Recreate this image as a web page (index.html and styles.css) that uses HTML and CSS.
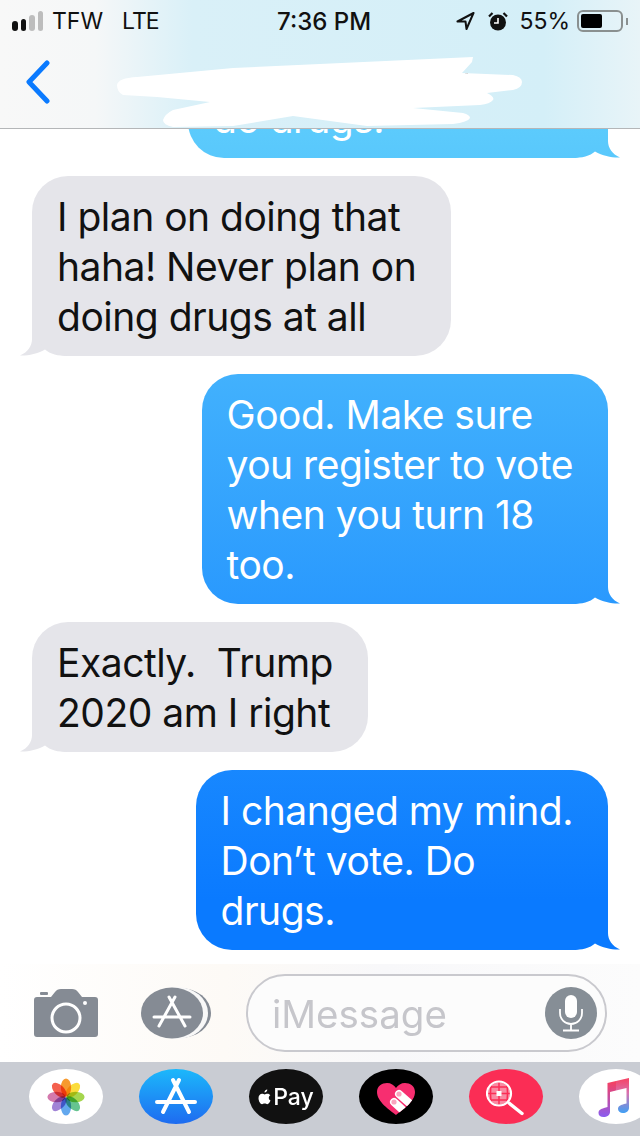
FILE: index.html
```html
<!DOCTYPE html>
<html lang="en">
<head>
  <meta charset="UTF-8">
  <meta name="viewport" content="width=device-width, initial-scale=1.0">
  <title>Messages</title>
  <link rel="stylesheet" href="styles.css">
</head>

<body>
  <div class="phone">
    <header class="top">
      <div class="status">
        <div class="status-left">
          <span class="signal"><i class="on s1"></i><i class="on s2"></i><i class="s3"></i><i class="s4"></i></span>
          <span class="carrier">TFW</span>
          <span class="network">LTE</span>
        </div>
        <div class="time">7:36 PM</div>
        <div class="status-right">
          <svg class="locate" width="19" height="18" viewBox="0 0 19 18"><path d="M17.5 1 1.5 9.5H9.5L10.5 17Z" fill="none" stroke="#111" stroke-width="2" stroke-linejoin="round"/></svg>
          <svg class="alarm" width="20" height="19" viewBox="0 0 20 19">
            <circle cx="10" cy="10.5" r="8" fill="#111"/>
            <path d="M10 6v5H6" fill="none" stroke="#fff" stroke-width="1.6"/>
            <path d="M1 4.5 4.5 1M19 4.5 15.5 1" stroke="#111" stroke-width="2.2"/>
          </svg>
          <span class="percent">55%</span>
          <span class="battery"><span class="charge"></span></span>
          <span class="nub"></span>
        </div>
      </div>
      <nav class="nav">
        <svg class="back" width="26" height="44" viewBox="0 0 26 44"><path d="M22 3 4 22l18 19" fill="none" stroke="#0a7aff" stroke-width="5" stroke-linecap="round" stroke-linejoin="round"/></svg>
      </nav>
      <svg class="scribble" width="640" height="128" viewBox="0 0 640 128">
        <g fill="#555">
          <rect x="190" y="72" width="7" height="2"/>
          <rect x="215" y="71" width="4" height="2"/>
          <rect x="447" y="72" width="8" height="2"/>
          <rect x="465" y="73" width="3" height="2"/>
        </g>
        <path fill="#fff" d="M117 85Q118 78 137 77L233 68 473 57 472 62 462 73 513 75Q522 77 522 82 522 88 513 90L487 93Q495 97 493 100 490 104 480 105L413 108 463 113Q470 115 470 118 468 122 453 124L367 126 293 116 233 126 173 127Q163 125 163 120 165 114 173 110L210 102 157 97 123 95Q117 92 117 85Z"/>
      </svg>
    </header>

    <main class="thread">
      <div class="bubble sent first">do drugs.</div>
      <div class="bubble received">I plan on doing that<br>haha! Never plan on<br>doing drugs at all</div>
      <div class="bubble sent">Good. Make sure<br>you register to vote<br>when you turn 18<br>too.</div>
      <div class="bubble received">Exactly.&nbsp; Trump<br>2020 am I right</div>
      <div class="bubble sent">I changed my mind.<br>Don’t vote. Do<br>drugs.</div>
    </main>

    <section class="composer">
      <svg class="camera" width="64" height="48" viewBox="0 0 64 48">
        <rect x="6" y="3" width="8" height="3" rx="1" fill="#858b94"/>
        <path fill="#858b94" d="M3 8H17L21 3Q23 0 27 0H38Q42 0 44 3L48 8H61Q64 8 64 11V45Q64 48 61 48H3Q0 48 0 45V11Q0 8 3 8Z"/>
        <circle cx="32" cy="29" r="14" fill="none" stroke="#fff" stroke-width="3"/>
        <circle cx="51" cy="14" r="2" fill="#fff"/>
      </svg>
      <svg class="apps" width="70" height="52" viewBox="0 0 70 52">
        <ellipse cx="39" cy="26" rx="31" ry="25" fill="#858b94"/>
        <ellipse cx="36" cy="26" rx="31" ry="26" fill="#f8f8f8"/>
        <ellipse cx="31" cy="26" rx="31" ry="25.5" fill="#858b94"/>
        <path d="M34 10 18 39M28 10 44 39M13 30H49" fill="none" stroke="#fff" stroke-width="3" stroke-linecap="round"/>
      </svg>
      <div class="input">
        <span class="placeholder">iMessage</span>
        <span class="mic">
          <svg width="30" height="38" viewBox="0 0 30 38">
            <rect x="9" y="1" width="12" height="23" rx="6" fill="#fff"/>
            <path d="M4 15v4a11 11 0 0 0 22 0v-4M15 30v6M7 36.5h16" fill="none" stroke="#fff" stroke-width="1.8"/>
          </svg>
        </span>
      </div>
    </section>

    <section class="strip">
      <div class="pill pill-white">
        <svg class="flower" width="38" height="38" viewBox="0 0 48 48">
          <ellipse cx="24" cy="12" rx="6.5" ry="11.5" fill="#f79a2e"/>
          <ellipse cx="24" cy="12" rx="6.5" ry="11.5" fill="#fbdc3c" transform="rotate(45 24 24)"/>
          <ellipse cx="24" cy="12" rx="6.5" ry="11.5" fill="#a5d64e" transform="rotate(90 24 24)"/>
          <ellipse cx="24" cy="12" rx="6.5" ry="11.5" fill="#66c490" transform="rotate(135 24 24)"/>
          <ellipse cx="24" cy="12" rx="6.5" ry="11.5" fill="#63a8ee" transform="rotate(180 24 24)"/>
          <ellipse cx="24" cy="12" rx="6.5" ry="11.5" fill="#a183d6" transform="rotate(225 24 24)"/>
          <ellipse cx="24" cy="12" rx="6.5" ry="11.5" fill="#d479ad" transform="rotate(270 24 24)"/>
          <ellipse cx="24" cy="12" rx="6.5" ry="11.5" fill="#f4604e" transform="rotate(315 24 24)"/>
        </svg>
      </div>
      <div class="pill pill-store">
        <svg width="44" height="40" viewBox="0 0 44 40">
          <path d="M25 3 9 35M19 3 35 35M3 25H41" fill="none" stroke="#fff" stroke-width="4" stroke-linecap="round"/>
        </svg>
      </div>
      <div class="pill pill-pay">
        <svg width="13" height="16" viewBox="0 0 16 20"><path fill="#fff" d="M11.5 .5c.2 1.8-1.5 4-3.5 3.9-.3-1.8 1.600-3.800 3.500-3.900zM15.500 14.500c-.8 2-2.400 4.500-4 4.500-1.200 0-1.800-.8-3.300-.8s-2.200.8-3.300.8C2.900 19 .5 15 .5 11.500c0-3.400 2.200-5.500 4.400-5.500 1.400 0 2.500.9 3.300.9s2-.9 3.700-.9c1.300 0 2.600.7 3.400 1.900-2.800 1.600-2.400 5.500.2 6.600z"/></svg>
        <span>Pay</span>
      </div>
      <div class="pill pill-heart">
        <svg class="heart" width="38" height="32" viewBox="0 0 38 32">
          <defs>
            <clipPath id="heart-shape"><path d="M19 32C13 27 0 19 0 9 0 3 5 0 10 0 14 0 17 2 19 5 21 2 24 0 28 0 33 0 38 3 38 9 38 19 25 27 19 32Z"/></clipPath>
          </defs>
          <g clip-path="url(#heart-shape)">
            <rect width="38" height="32" fill="#f72e70"/>
            <path d="M22 11 38 25M17 19 30 31" stroke="#fff" stroke-width="8" stroke-linecap="round"/>
          </g>
          <circle cx="22" cy="11" r="2.6" fill="#f9a5bf"/>
          <circle cx="17" cy="19" r="2.6" fill="#f9a5bf"/>
        </svg>
      </div>
      <div class="pill pill-search">
        <svg width="40" height="40" viewBox="0 0 40 40">
          <defs>
            <clipPath id="lens"><circle cx="13" cy="16.5" r="11"/></clipPath>
          </defs>
          <circle cx="13" cy="16.5" r="11" fill="#f98aa2"/>
          <g clip-path="url(#lens)">
            <path d="M13 4V29M6 4Q3 16 6 29M20 4Q23 16 20 29M1 16.5H25M2 10H24M2 23H24" fill="none" stroke="#fb2d55" stroke-width="1.5"/>
            <rect x="10.5" y="14" width="5" height="5" fill="#fff"/>
          </g>
          <circle cx="13" cy="16.5" r="12" fill="none" stroke="#fff" stroke-width="2.2"/>
          <path d="M23 26 36 36.5" stroke="#fff" stroke-width="3.4" stroke-linecap="round"/>
        </svg>
      </div>
      <div class="pill pill-white">
        <svg class="music" width="32" height="40" viewBox="0 0 32 40">
          <defs>
            <linearGradient id="note-left" gradientUnits="userSpaceOnUse" x1="0" y1="4" x2="0" y2="40">
              <stop offset="0" stop-color="#f8405e"/>
              <stop offset="1" stop-color="#8a5cf0"/>
            </linearGradient>
            <linearGradient id="note-right" gradientUnits="userSpaceOnUse" x1="0" y1="0" x2="0" y2="36">
              <stop offset="0" stop-color="#f8405e"/>
              <stop offset=".45" stop-color="#d872b0"/>
              <stop offset="1" stop-color="#3ea0f5"/>
            </linearGradient>
          </defs>
          <path fill="url(#note-left)" d="M9.5 6 18 4V13.4L12 15V35C12 38 9 40 5.5 40 2.5 40 .5 38.5 .5 36 .5 33 3 32 6 31L9.5 30Z"/>
          <path fill="url(#note-right)" d="M18 4 31 1V31C31 34 28 36 25 36 22 36 20 34 20 32 20 29 23 28 26 27L28.5 26.5V11L18 13.4Z"/>
        </svg>
      </div>
    </section>
  </div>
</body>
</html>
```

FILE: styles.css
```css
html, body {
  margin: 0;
  background: #fff;
}

.phone {
  width: 640px;
  height: 1136px;
  display: flex;
  flex-direction: column;
  overflow: hidden;
  font-family: Inter, "Liberation Sans", sans-serif;
}

/* header */
.top {
  position: relative;
  flex: none;
  height: 129px;
  box-sizing: border-box;
  background: linear-gradient(to right, #f8f8f8 0, #f5f7f8 15%, #d9f0f8 30%, #d4eff8 85%, #e8f4f8 100%);
  border-bottom: 1px solid #b4b6b8;
}
.scribble {
  position: absolute;
  top: 0;
  left: 0;
}
.status {
  display: grid;
  grid-template-columns: 265px auto 1fr;
  align-items: center;
  height: 40px;
  padding: 2px 12px 0;
  box-sizing: border-box;
  color: #111;
  font-size: 23px;
}
.status-left, .status-right {
  display: flex;
  align-items: center;
}
.status-right {
  justify-content: flex-end;
}
.signal {
  display: flex;
  align-items: flex-end;
  gap: 3px;
  height: 20px;
  margin-right: 9px;
}
.signal i {
  width: 5.5px;
  background: #bdbdbd;
  border-radius: 3px;
}
.signal .on { background: #111; }
.s1 { height: 10px; }
.s2 { height: 12px; }
.s3 { height: 16px; }
.s4 { height: 20px; }
.network {
  margin-left: 19px;
  letter-spacing: -1px;
}
.time { font-weight: 500; font-size: 24px; }
.locate { margin-right: 13px; }
.alarm { margin-right: 11px; }
.percent { margin-right: 7px; }
.battery {
  width: 46px;
  height: 22px;
  box-sizing: border-box;
  padding: 2px;
  border: 2px solid #8a9090;
  border-radius: 6px;
}
.charge {
  display: block;
  width: 21px;
  height: 100%;
  background: #000;
  border-radius: 2px;
}
.nub {
  width: 2px;
  height: 7px;
  margin-left: 3px;
  background: #8a9090;
}
.nav {
  display: flex;
  align-items: center;
  height: 88px;
  padding: 0 0 4px 25px;
  box-sizing: border-box;
}

/* messages */
.thread {
  position: relative;
  z-index: 0;
  flex: 1;
  min-height: 0;
  display: flex;
  flex-direction: column;
  justify-content: flex-end;
  gap: 18px;
  padding: 0 32px 14px;
  overflow: hidden;
  font-size: 39px;
  line-height: 50px;
  letter-spacing: -0.5px;
}
.bubble {
  position: relative;
  flex: none;
  padding: 16px 35px 14px 25px;
  border-radius: 36px;
}
.first {
  width: 420px;
  box-sizing: border-box;
}
.sent {
  align-self: flex-end;
  color: #fff;
  background: linear-gradient(#5ccbfc 128px, #0a7aff 900px) fixed;
}
.received {
  align-self: flex-start;
  color: #111;
  background: #e5e5ea;
}
/* tail, behind the bubble so the text stays on top */
.bubble::before {
  content: "";
  position: absolute;
  z-index: -1;
  bottom: 0;
  width: 48px;
  height: 36px;
}
.sent::before {
  right: -12px;
  background: inherit;
  clip-path: path("M0 0H36V19C36 26 40 32 48 35.5 41 36 31 34 23 29.5 18 34 10 36 0 36Z");
}
.received::before {
  left: -12px;
  background: #e5e5ea;
  clip-path: path("M48 0H12V19C12 26 8 32 0 35.5 7 36 17 34 25 29.5 30 34 38 36 48 36Z");
}

/* input row */
.composer {
  flex: none;
  display: flex;
  align-items: center;
  height: 98px;
  padding: 0 33px 0 34px;
  box-sizing: border-box;
  background: linear-gradient(to right, #fff 0, #fdfaf6 35%, #f8f8fa 60%, #fcfcfc 100%);
}
.camera { margin-right: 43px; }
.apps { margin-right: 35px; }
.input {
  flex: 1;
  display: flex;
  align-items: center;
  justify-content: space-between;
  height: 78px;
  box-sizing: border-box;
  padding: 0 8px 0 24px;
  border: 2px solid #c9c9ce;
  border-radius: 39px;
  background: #fcfcfc;
}
.placeholder {
  color: #c6c6cb;
  font-size: 38.5px;
  padding-top: 2px;
}
.mic {
  display: flex;
  align-items: center;
  justify-content: center;
  width: 52px;
  height: 52px;
  border-radius: 50%;
  background: #868e96;
}

/* app strip */
.strip {
  flex: none;
  display: flex;
  gap: 36px;
  height: 74px;
  padding: 7px 0 0 29px;
  box-sizing: border-box;
  background: #c9ccd3;
}
.pill {
  flex: none;
  display: flex;
  align-items: center;
  justify-content: center;
  width: 74px;
  height: 55px;
  border-radius: 50%;
}
.pill-white { background: #fff; }
.pill-store { background: linear-gradient(#1cb8fb, #1e6bf0); }
.pill-pay {
  gap: 2px;
  background: #111;
  color: #fff;
  font-size: 23px;
  font-weight: 500;
}
.pill-heart { background: #000; }
.pill-search { background: #fb2d55; }
.flower ellipse { mix-blend-mode: multiply; }
.heart { margin-top: 5px; }
.music { margin-left: -4px; }
```
